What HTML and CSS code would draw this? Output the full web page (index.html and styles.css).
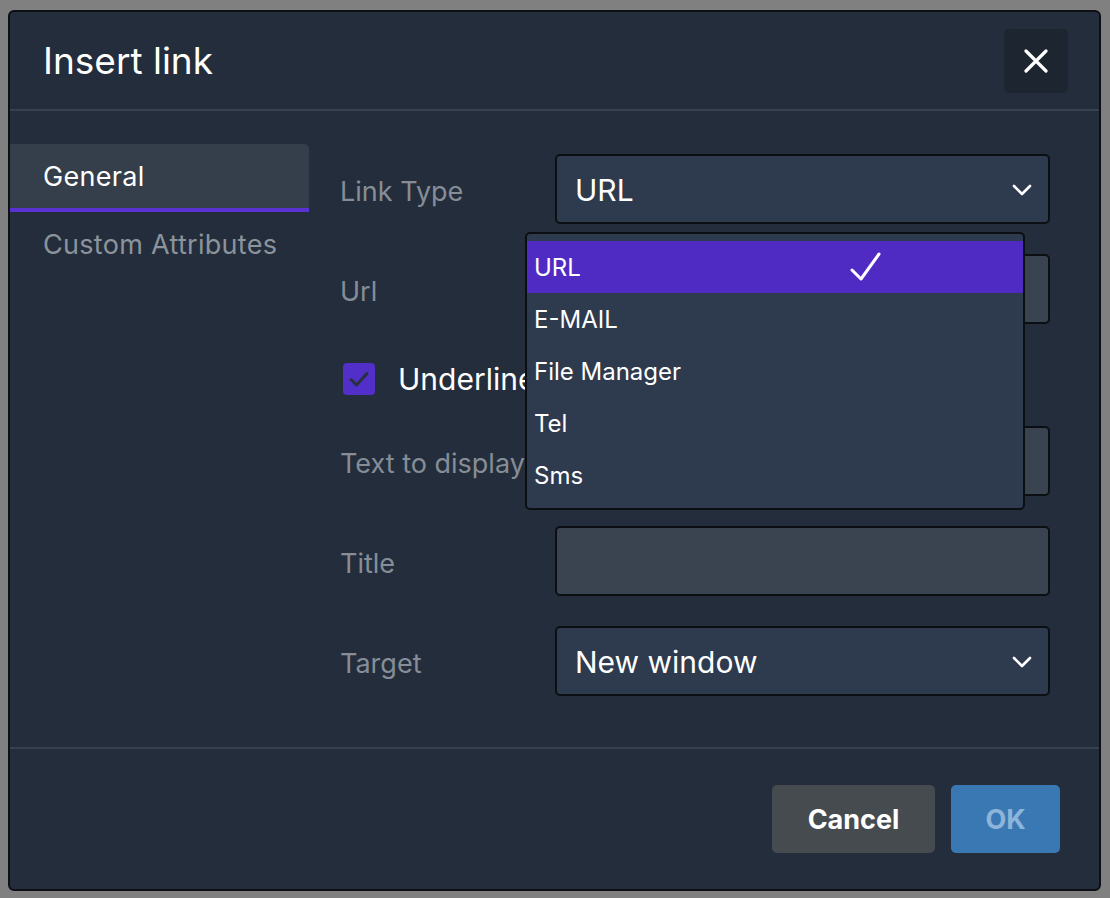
FILE: index.html
```html
<!DOCTYPE html>
<html>
<head>
    <title>Insert link</title>
    <link rel="stylesheet" href="styles.css">
</head>
<body>

    <div class="dialog">
        <header class="dialog-header">
            <h1>Insert link</h1>
            <button class="close-btn" aria-label="Close">
                <svg width="24" height="24" viewBox="0 0 24 24">
                    <path d="M2 2 L22 22 M22 2 L2 22" stroke="#fff" stroke-width="3.2" stroke-linecap="round" fill="none"/>
                </svg>
            </button>
        </header>

        <div class="dialog-body">
            <nav class="tabs">
                <div class="tab active">General</div>
                <div class="tab">Custom Attributes</div>
            </nav>

            <div class="form">
                <div class="form-row">
                    <label class="field-label">Link Type</label>
                    <div class="select-wrap">
                        <div class="select">
                            <span>URL</span>
                            <svg class="chevron" width="20" height="12" viewBox="0 0 20 12">
                                <path d="M2 2 L10 10 L18 2" stroke="#fff" stroke-width="2.6" stroke-linecap="round" stroke-linejoin="round" fill="none"/>
                            </svg>
                        </div>
                        <ul class="dropdown">
                            <li class="selected">URL
                                <svg class="tick" width="32" height="30" viewBox="0 0 32 30">
                                    <path d="M2 18 L11 27 L29 2" stroke="#fff" stroke-width="3" stroke-linecap="round" stroke-linejoin="round" fill="none"/>
                                </svg>
                            </li>
                            <li>E-MAIL</li>
                            <li>File Manager</li>
                            <li>Tel</li>
                            <li>Sms</li>
                        </ul>
                    </div>
                </div>

                <div class="form-row">
                    <label class="field-label">Url</label>
                    <div class="input"></div>
                </div>

                <div class="check-row">
                    <span class="checkbox">
                        <svg width="32" height="32" viewBox="0 0 32 32">
                            <path d="M8 16.5 L13.5 22 L24 10.5" stroke="#27313f" stroke-width="3" stroke-linecap="round" stroke-linejoin="round" fill="none"/>
                        </svg>
                    </span>
                    <span class="check-label">Underline</span>
                </div>

                <div class="form-row">
                    <label class="field-label">Text to display</label>
                    <div class="input"></div>
                </div>

                <div class="form-row">
                    <label class="field-label">Title</label>
                    <div class="input"></div>
                </div>

                <div class="form-row">
                    <label class="field-label">Target</label>
                    <div class="select">
                        <span>New window</span>
                        <svg class="chevron" width="20" height="12" viewBox="0 0 20 12">
                            <path d="M2 2 L10 10 L18 2" stroke="#fff" stroke-width="2.6" stroke-linecap="round" stroke-linejoin="round" fill="none"/>
                        </svg>
                    </div>
                </div>
            </div>
        </div>

        <footer class="dialog-footer">
            <button class="btn btn-cancel">Cancel</button>
            <button class="btn btn-ok">OK</button>
        </footer>
    </div>

</body>
</html>
```

FILE: styles.css
```css
/* Base */
body {
    margin: 0;
    padding: 0;
    background-color: #808080;
    font-family: 'Inter', 'Noto Sans', sans-serif;
    color: #fff;
}

/* Dialog shell */
.dialog {
    width: 1093px;
    height: 881px;
    margin: 10px 0 0 8px;
    box-sizing: border-box;
    border: 2px solid #0c0f14;
    border-radius: 6px;
    background-color: #232d3b;
    display: flex;
    flex-direction: column;
    overflow: hidden;
}

.dialog-header {
    height: 97px;
    flex-shrink: 0;
    display: flex;
    align-items: center;
    justify-content: space-between;
    padding: 0 31px 0 33px;
    border-bottom: 2px solid #37424f;
}

.dialog-header h1 {
    margin: 0;
    font-size: 37px;
    font-weight: 400;
    color: #fff;
}

.close-btn {
    width: 64px;
    height: 64px;
    border: none;
    border-radius: 5px;
    background-color: #1d2530;
    display: flex;
    align-items: center;
    justify-content: center;
    padding: 0;
}

/* Body */
.dialog-body {
    flex: 1;
    display: flex;
}

.tabs {
    width: 299px;
    padding-top: 33px;
    flex-shrink: 0;
}

.tab {
    height: 64px;
    padding-left: 33px;
    display: flex;
    align-items: center;
    font-size: 27px;
    letter-spacing: 0.3px;
    color: #8c939c;
}

.tab.active {
    color: #fff;
    background-color: #353e4b;
    border-bottom: 4px solid #5a32d2;
    border-top-right-radius: 5px;
}

.form {
    padding: 43px 0 0 31px;
    display: flex;
    flex-direction: column;
    gap: 30px;
}

.form-row {
    display: flex;
    align-items: center;
}

.field-label {
    width: 215px;
    padding-top: 5px;
    font-size: 27px;
    color: #868d97;
    white-space: nowrap;
}

.select-wrap {
    position: relative;
}

.select,
.input {
    width: 495px;
    height: 70px;
    flex-shrink: 0;
    box-sizing: border-box;
    border: 2px solid #0b0e13;
    border-radius: 5px;
}

.select {
    background-color: #2e3a4d;
    display: flex;
    align-items: center;
    justify-content: space-between;
    padding: 2px 16px 0 18px;
    font-size: 30px;
}

.input {
    background-color: #3a4350;
}

/* Open dropdown list */
.dropdown {
    position: absolute;
    top: 78px;
    left: -30px;
    width: 500px;
    box-sizing: border-box;
    margin: 0;
    padding: 7px 0 7px;
    list-style: none;
    background-color: #2e3a4d;
    border: 2px solid #0b0e13;
    border-radius: 5px;
    z-index: 10;
}

.dropdown li {
    height: 52px;
    display: flex;
    align-items: center;
    padding-left: 7px;
    font-size: 24px;
    color: #fff;
    position: relative;
}

.dropdown li.selected {
    background-color: #4f2bc4;
}

.dropdown .tick {
    position: absolute;
    left: 323px;
    top: 11px;
}

/* Checkbox */
.check-row {
    display: flex;
    align-items: center;
    height: 34px;
    padding: 8px 0 0 3px;
}

.checkbox {
    width: 32px;
    height: 32px;
    border-radius: 4px;
    background-color: #532fc9;
    display: flex;
}

.check-label {
    margin-left: 23px;
    font-size: 30px;
    color: #fff;
}

/* Footer */
.dialog-footer {
    height: 140px;
    flex-shrink: 0;
    border-top: 2px solid #37424f;
    display: flex;
    align-items: center;
    justify-content: flex-end;
    gap: 16px;
    padding-right: 39px;
}

.btn {
    height: 68px;
    border: none;
    border-radius: 5px;
    font-family: 'Inter', 'Noto Sans', sans-serif;
    font-size: 27px;
    font-weight: 700;
}

.btn-cancel {
    width: 163px;
    background-color: #464b50;
    color: #fff;
}

.btn-ok {
    width: 109px;
    background-color: #3a78b3;
    color: #8db4d9;
}
```
